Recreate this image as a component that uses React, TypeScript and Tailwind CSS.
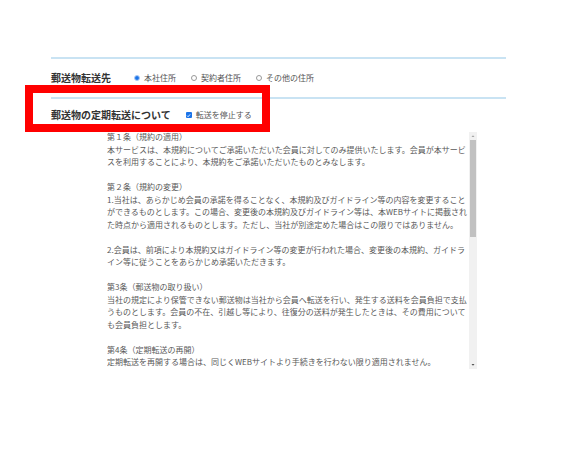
import React from 'react';

const terms: string[] = [
  '第１条（規約の適用）',
  '本サービスは、本規約についてご承諾いただいた会員に対してのみ提供いたします。会員が本サービ',
  'スを利用することにより、本規約をご承諾いただいたものとみなします。',
  '',
  '第２条（規約の変更）',
  '1.当社は、あらかじめ会員の承諾を得ることなく、本規約及びガイドライン等の内容を変更すること',
  'ができるものとします。この場合、変更後の本規約及びガイドライン等は、本WEBサイトに掲載され',
  'た時点から適用されるものとします。ただし、当社が別途定めた場合はこの限りではありません。',
  '',
  '2.会員は、前項により本規約又はガイドライン等の変更が行われた場合、変更後の本規約、ガイドラ',
  'イン等に従うことをあらかじめ承諾いただきます。',
  '',
  '第3条（郵送物の取り扱い）',
  '当社の規定により保管できない郵送物は当社から会員へ転送を行い、発生する送料を会員負担で支払',
  'うものとします。会員の不在、引越し等により、往復分の送料が発生したときは、その費用について',
  'も会員負担とします。',
  '',
  '第4条（定期転送の再開）',
  '定期転送を再開する場合は、同じくWEBサイトより手続きを行わない限り適用されません。',
];

const Radio: React.FC<{ label: string; checked?: boolean }> = ({ label, checked }) => (
  <label className="flex items-center gap-[4px]">
    <span
      className={`w-[6px] h-[6px] rounded-full border flex items-center justify-center ${
        checked ? 'border-[#9cc0f2] bg-white' : 'border-[#999] bg-white'
      }`}
    >
      {checked && <span className="w-[4px] h-[4px] rounded-full bg-[#1a73e8]" />}
    </span>
    <span className="text-[8px] text-[#555]">{label}</span>
  </label>
);

export default function App() {
  return (
    <div
      className="relative w-[567px] h-[454px] bg-white overflow-hidden"
      style={{ fontFamily: '"Noto Sans CJK JP", "Noto Sans", sans-serif' }}
    >
      <div className="pt-[57px] pl-[51px]">
        <div className="w-[455px]">
          <div className="h-[2px] bg-[#c9e3f3]" />
          <div className="h-[38px] flex items-center">
            <h3 className="w-[83px] text-[10px] font-bold text-[#333] leading-none">郵送物転送先</h3>
            <div className="flex items-center gap-[15px]">
              <Radio label="本社住所" checked />
              <Radio label="契約者住所" />
              <Radio label="その他の住所" />
            </div>
          </div>
          <div className="h-[2px] bg-[#c9e3f3]" />
          <div className="h-[32px] flex items-center">
            <h3 className="text-[10px] font-bold text-[#333] leading-none">郵送物の定期転送について</h3>
            <label className="ml-[15px] flex items-center gap-[4px]">
              <span className="w-[6px] h-[6px] rounded-[1px] bg-[#1a73e8] flex items-center justify-center">
                <svg width="5" height="5" viewBox="0 0 10 10">
                  <path d="M2 5.2 L4.2 7.4 L8.2 2.8" stroke="white" strokeWidth="1.8" fill="none" />
                </svg>
              </span>
              <span className="text-[8px] text-[#555]">転送を停止する</span>
            </label>
          </div>
          <div className="ml-[56px] w-[370px] h-[238px] flex">
            <div className="flex-1 overflow-hidden text-[8px] leading-[12.5px] text-[#595959]">
              {terms.map((t, i) => (
                <div key={i} className="whitespace-nowrap h-[12.5px]">
                  {t}
                </div>
              ))}
            </div>
            <div className="mt-[1px] w-[8px] h-[237px] bg-[#f1f1f1] flex flex-col items-center">
              <svg width="8" height="8" viewBox="0 0 8 8">
                <path d="M2.5 5 L4 3.3 L5.5 5 Z" fill="#a3a3a3" />
              </svg>
              <div className="w-[6px] h-[97px] bg-[#c1c1c1]" />
              <div className="flex-1" />
              <svg width="8" height="8" viewBox="0 0 8 8">
                <path d="M2.5 3 L4 4.7 L5.5 3 Z" fill="#505050" />
              </svg>
            </div>
          </div>
        </div>
      </div>
      <div className="absolute left-[25px] top-[85px] w-[245px] h-[47px] border-[8px] border-[#ff0000]" />
    </div>
  );
}
